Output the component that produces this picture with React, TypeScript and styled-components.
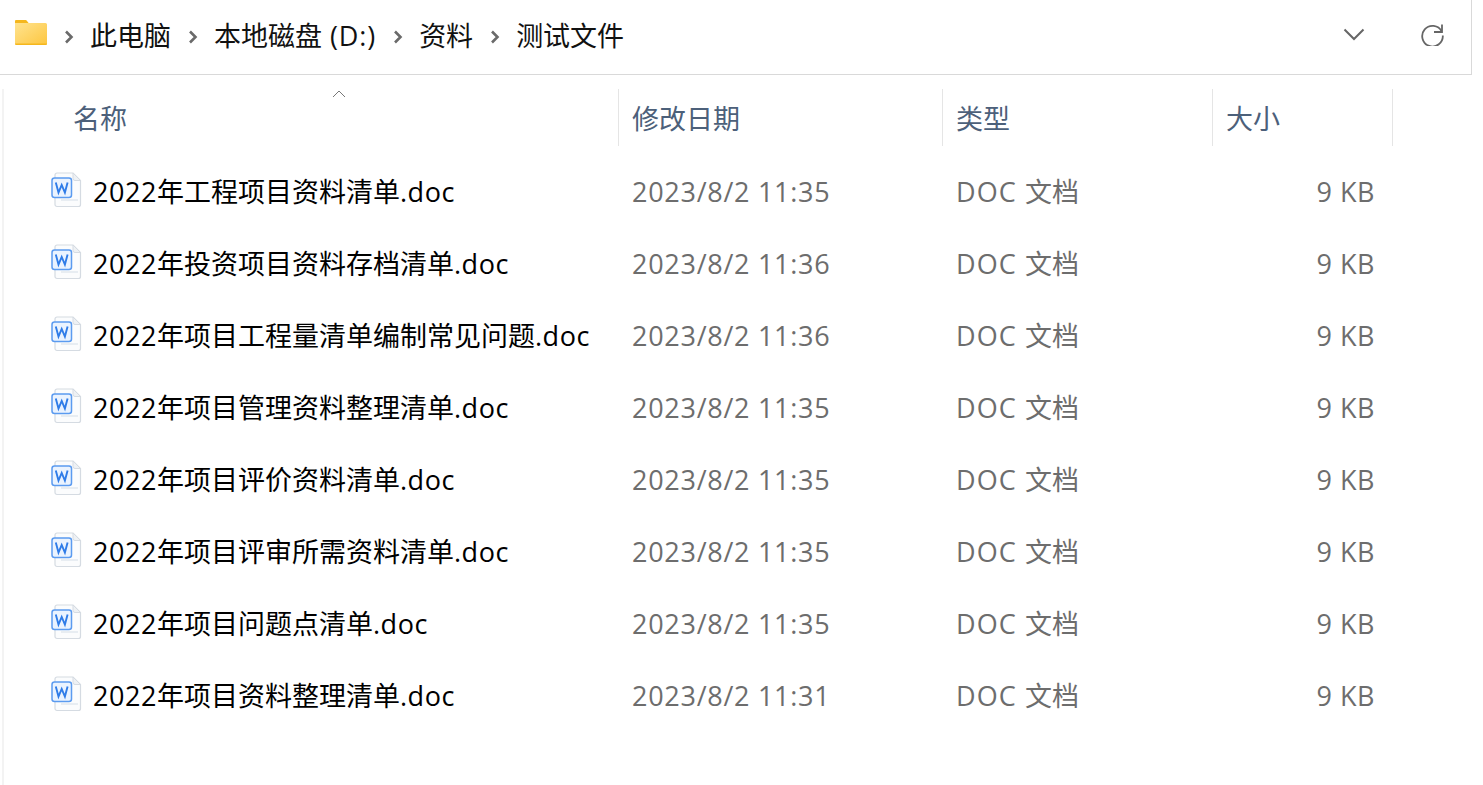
import React from "react";
import styled, { createGlobalStyle } from "styled-components";

const Global = createGlobalStyle`
  html, body { margin: 0; padding: 0; background: #fff; overflow: hidden; }
  body { font-family: "Open Sans", "Noto Sans CJK SC", sans-serif; }
`;

const Page = styled.div`
  width: 1483px;
  height: 785px;
  display: flex;
  flex-direction: column;
  background: #fff;
`;

const AddressBar = styled.div`
  box-sizing: border-box;
  width: 1472px;
  height: 75px;
  border-right: 1px solid #d9d9d9;
  border-bottom: 1px solid #d9d9d9;
  display: flex;
  align-items: center;
  padding-left: 15px;
`;

const Crumbs = styled.div`
  display: flex;
  align-items: center;
  flex: 1;
  height: 72px;
`;

const Crumb = styled.span`
  font-size: 27px;
  color: #111;
  line-height: 36px;
  white-space: nowrap;
  padding-bottom: 2px;
`;

const Sep = styled.svg`
  width: 10px;
  height: 14px;
  margin: 0 16.5px;
  flex: none;
`;

const BarIcons = styled.div`
  display: flex;
  align-items: center;
  margin-right: 27px;
  gap: 56px;
  margin-top: -6px;
`;

const FolderSvg = styled.svg`
  width: 32px;
  height: 25px;
  flex: none;
  margin-top: -9px;
`;

const RefreshSvg = styled.svg`
  width: 23px;
  height: 23px;
  flex: none;
`;

const Body = styled.div`
  flex: 1;
  margin-top: 14px;
  margin-left: 2px;
  border-left: 2px solid #f3f3f3;
  position: relative;
`;

const HeaderRow = styled.div`
  display: grid;
  grid-template-columns: 615px 324px 270px 180px;
  height: 57px;
`;

const HeaderCell = styled.div<{ $pad: number }>`
  font-size: 27px;
  color: #4c607a;
  display: flex;
  align-items: center;
  padding-left: ${(p) => p.$pad}px;
  box-sizing: border-box;
  border-right: 1px solid #e5e5e5;
  white-space: nowrap;
`;

const SortCaret = styled.svg`
  position: absolute;
  left: 328px;
  top: 0;
  width: 14px;
  height: 9px;
`;

const List = styled.div`
  margin-top: 8px;
  display: flex;
  flex-direction: column;
`;

const Row = styled.div`
  display: grid;
  grid-template-columns: 614px 324px 270px 163px;
  height: 72px;
  align-items: center;
`;

const NameCell = styled.div`
  display: flex;
  align-items: center;
  padding-left: 47px;
  font-size: 27px;
  color: #000;
  white-space: nowrap;
`;

const FileName = styled.span`
  margin-left: 11px;
`;

const MetaCell = styled.div<{ $right?: boolean; $top?: number }>`
  font-size: 27px;
  color: #6d6d6d;
  white-space: nowrap;
  padding-left: 14px;
  padding-top: ${(p) => p.$top ?? 2}px;
  text-align: ${(p) => (p.$right ? "right" : "left")};
`;

const Latin = styled.span<{ $track: number }>`
  letter-spacing: ${(p) => p.$track}px;
`;

const DocSvg = styled.svg`
  width: 31px;
  height: 36px;
  flex: none;
`;

const Mixed = ({ text, track = 0.55 }: { text: string; track?: number }) => (
  <>
    {text.split(/([\x00-\x7f]+)/).map((part, i) =>
      /[\x00-\x7f]/.test(part) ? (
        <Latin key={i} $track={track}>
          {part}
        </Latin>
      ) : (
        part
      )
    )}
  </>
);

const FolderIcon = () => (
  <FolderSvg viewBox="0 0 32 25">
    <defs>
      <linearGradient id="fg" x1="0" y1="0" x2="1" y2="1">
        <stop offset="0" stopColor="#ffe38f" />
        <stop offset="1" stopColor="#fdc63f" />
      </linearGradient>
    </defs>
    <path d="M1 0h9a2 2 0 0 1 2 1l2 2.5H0V1a1 1 0 0 1 1-1z" fill="#f5b71d" />
    <path d="M0 3h30.5a1.5 1.5 0 0 1 1.5 1.5V23.5a1.5 1.5 0 0 1-1.5 1.5H1.5A1.5 1.5 0 0 1 0 23.5z" fill="url(#fg)" />
    <path d="M0 23.5h32a1.5 1.5 0 0 1-1.5 1.5h-29A1.5 1.5 0 0 1 0 23.5z" fill="#f5b71d" />
  </FolderSvg>
);

const DocIcon = () => (
  <DocSvg viewBox="0 0 31 36">
    <path d="M6 1h16l7.5 7.5v24a2 2 0 0 1-2 2H6a2 2 0 0 1-2-2V3a2 2 0 0 1 2-2z" fill="#fbfcfd" stroke="#d5dbe2" strokeWidth="1.2" />
    <path d="M22 1v5.5a2 2 0 0 0 2 2h5.5z" fill="#eef1f4" stroke="#d5dbe2" strokeWidth="1" />
    <path d="M10 28h17" stroke="#e4e9ef" strokeWidth="1.6" />
    <rect x="1" y="6" width="19.5" height="19.5" rx="2.5" fill="#eaf3ff" stroke="#5b9bf0" strokeWidth="1.5" />
    <path d="M4.8 10.5l2.7 10L10.7 13l3.2 7.5 2.7-10" fill="none" stroke="#2f7ce8" strokeWidth="1.9" strokeLinejoin="miter" />
  </DocSvg>
);

const Chevron = () => (
  <Sep viewBox="0 0 10 14">
    <path d="M2 1.5L7.5 7 2 12.5" fill="none" stroke="#6a6a6a" strokeWidth="2.6" />
  </Sep>
);

const files = [
  ["2022年工程项目资料清单.doc", "2023/8/2 11:35"],
  ["2022年投资项目资料存档清单.doc", "2023/8/2 11:36"],
  ["2022年项目工程量清单编制常见问题.doc", "2023/8/2 11:36"],
  ["2022年项目管理资料整理清单.doc", "2023/8/2 11:35"],
  ["2022年项目评价资料清单.doc", "2023/8/2 11:35"],
  ["2022年项目评审所需资料清单.doc", "2023/8/2 11:35"],
  ["2022年项目问题点清单.doc", "2023/8/2 11:35"],
  ["2022年项目资料整理清单.doc", "2023/8/2 11:31"],
];

const crumbs = ["此电脑", "本地磁盘 (D:)", "资料", "测试文件"];

export default function App() {
  return (
    <Page>
      <Global />
      <AddressBar>
        <Crumbs>
          <FolderIcon />
          {crumbs.map((c) => (
            <React.Fragment key={c}>
              <Chevron />
              <Crumb>
                <Mixed text={c} track={0.9} />
              </Crumb>
            </React.Fragment>
          ))}
        </Crumbs>
        <BarIcons>
          <svg width="22" height="13" viewBox="0 0 22 13">
            <path d="M1.5 1.5L11 11l9.5-9.5" fill="none" stroke="#666" strokeWidth="2" />
          </svg>
          <RefreshSvg viewBox="0 0 23 23">
            <path d="M21 1.5v7.5h-8" fill="none" stroke="#666" strokeWidth="1.8" />
            <path d="M20.7 8.5A10.3 10.3 0 1 0 21.8 12.5" fill="none" stroke="#666" strokeWidth="1.8" />
          </RefreshSvg>
        </BarIcons>
      </AddressBar>
      <Body>
        <SortCaret viewBox="0 0 14 9">
          <path d="M1 8l6-6 6 6" fill="none" stroke="#777" strokeWidth="1" />
        </SortCaret>
        <HeaderRow>
          <HeaderCell $pad={69}>名称</HeaderCell>
          <HeaderCell $pad={13}>修改日期</HeaderCell>
          <HeaderCell $pad={13}>类型</HeaderCell>
          <HeaderCell $pad={13}>大小</HeaderCell>
        </HeaderRow>
        <List>
          {files.map(([name, date]) => (
            <Row key={name}>
              <NameCell>
                <DocIcon />
                <FileName>
                  <Mixed text={name} />
                </FileName>
              </NameCell>
              <MetaCell>
                <Mixed text={date} track={0.72} />
              </MetaCell>
              <MetaCell $top={0}>
                <Mixed text="DOC " track={1.1} />
                文档
              </MetaCell>
              <MetaCell $right>
                <Mixed text="9 KB" track={0.5} />
              </MetaCell>
            </Row>
          ))}
        </List>
      </Body>
    </Page>
  );
}
